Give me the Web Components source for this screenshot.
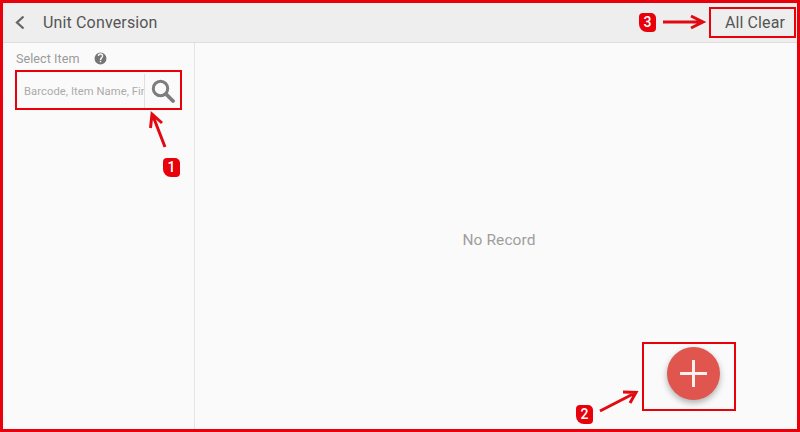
<!DOCTYPE html>
<html><head><meta charset="utf-8"><style>
html,body{margin:0;padding:0;width:800px;height:432px;overflow:hidden;background:#fafafa}
</style></head><body>
<template id="t-app"><style>
:host{display:flex;flex-direction:column;position:relative;box-sizing:border-box;width:800px;height:432px;border:3px solid #e8000b;background:#fafafa;font-family:Roboto,"Liberation Sans",sans-serif;overflow:hidden}
.body{flex:1;display:flex;min-height:0}
</style><slot name="bar"></slot><div class="body"><slot></slot></div><slot name="over"></slot></template>

<template id="t-bar"><style>
:host{display:flex;align-items:center;box-sizing:border-box;height:40px;background:#eeeeee;border-bottom:1px solid #dedede;color:#555}
svg{display:block;margin-left:11px}
.title{margin-left:18px;font-size:16px;letter-spacing:.15px}
.clear{margin-left:auto;margin-right:12px;font-size:16px;letter-spacing:.1px}
</style><svg width="11" height="15" viewBox="0 0 11 15" fill="none" stroke="#666" stroke-width="2.300"><path d="M9.500 1.500 L3 7.500 L9.500 13.500"/></svg><span class="title"><slot name="title"></slot></span><span class="clear"><slot name="action"></slot></span></template>

<template id="t-side"><style>
:host{display:block;box-sizing:border-box;width:192px;flex:none;border-right:1px solid #e4e4e4;padding:7px 12px 0 13px;color:#9a9a9a}
.lab{display:flex;align-items:center;height:16px;font-size:12.600px;letter-spacing:.05px}
svg{margin-left:14px;display:block}
.box{margin-top:8px}
</style><div class="lab"><slot name="label"></slot><svg width="13" height="13" viewBox="0 0 24 24"><path fill="#757575" d="M12 1a11 11 0 1 0 0 22 11 11 0 0 0 0-22zm1.300 18h-2.600v-2.600h2.600V19zm2.600-8.400-1.100 1.200c-.9.900-1.400 1.600-1.400 3.200h-2.600v-.6c0-1.400.5-2.700 1.400-3.700l1.600-1.600c.5-.4.700-1 .7-1.700a2.500 2.500 0 0 0-5 0H7a5 5 0 0 1 10 0c0 1.100-.4 2-1.100 2.700z"/></svg></div><div class="box"><slot></slot></div></template>

<template id="t-search"><style>
:host{display:flex;box-sizing:border-box;height:34px;width:164px;align-items:stretch;font-size:11.200px;color:#ababab;letter-spacing:.08px}
.txt{width:129px;flex:none;box-sizing:border-box;padding-left:8px;overflow:hidden;white-space:nowrap;line-height:36px;border-right:1px solid #e0e0e0}
.btn{flex:1;display:flex;align-items:center;justify-content:center}
</style><div class="txt"><slot></slot></div><div class="btn"><svg width="24" height="24" viewBox="0 0 24 24" fill="none" stroke="#7d7d7d"><circle cx="9.500" cy="9.500" r="7.200" stroke-width="3"/><path d="M15 15 L22 22" stroke-width="3.800" stroke-linecap="round"/></svg></div></template>

<template id="t-main"><style>
:host{flex:1;display:flex;align-items:center;justify-content:center;color:#9e9e9e;font-size:15.500px;letter-spacing:.1px;padding-top:7px;padding-left:6px;min-width:0}
</style><slot></slot></template>

<template id="t-fab"><style>
:host{position:absolute;left:664px;top:344px;width:53px;height:53px;border-radius:50%;background:#e0564e;box-shadow:0 3px 6px rgba(0,0,0,.3);display:flex;align-items:center;justify-content:center}
</style><svg width="27" height="27" viewBox="0 0 27 27" stroke="#fdf0ee" stroke-width="3"><path d="M13.500 0V27M0 13.500H27"/></svg></template>

<template id="t-mark"><style>
:host{position:absolute;box-sizing:border-box;border:2px solid #e8000b;display:block}
</style></template>

<template id="t-badge"><style>
:host{position:absolute;box-sizing:border-box;width:17px;height:19px;background:#e8000b;border-radius:4px 5px 4px 8px;color:#fff;font-family:Roboto,"Liberation Sans",Arial,sans-serif;font-weight:500;font-size:14px;line-height:19px;text-align:center}
</style><slot></slot></template>

<template id="t-arrows"><style>
:host{position:absolute;left:-3px;top:-3px;width:800px;height:432px;display:block;pointer-events:none}
svg{display:block}
</style><svg width="800" height="432" fill="none" stroke="#e20a12" stroke-width="3"><path d="M165 147 L153 116 M150.500 128 L152 114 L162 123"/><path d="M663 22 H702 M691 16 L703 22 L691 28"/><path d="M600 411 L635 393 M623 392 L636 392.500 L630 403"/></svg></template>

<ui-app>
  <ui-bar slot="bar"><span slot="title">Unit Conversion</span><span slot="action">All Clear</span></ui-bar>
  <ui-side><span slot="label">Select Item</span><ui-search>Barcode, Item Name, Find</ui-search></ui-side>
  <ui-main>No Record</ui-main>
  <ui-fab slot="over"></ui-fab>
  <ui-mark slot="over" style="left:12px;top:67px;width:167px;height:40px"></ui-mark>
  <ui-mark slot="over" style="left:706px;top:4px;width:87px;height:31px"></ui-mark>
  <ui-mark slot="over" style="left:639px;top:339px;width:94px;height:69px"></ui-mark>
  <ui-arrows slot="over"></ui-arrows>
  <ui-badge slot="over" style="left:160px;top:155px">1</ui-badge>
  <ui-badge slot="over" style="left:573px;top:402px">2</ui-badge>
  <ui-badge slot="over" style="left:636px;top:10px">3</ui-badge>
</ui-app>
<script>
const defs={'ui-app':'t-app','ui-bar':'t-bar','ui-side':'t-side','ui-search':'t-search','ui-main':'t-main','ui-fab':'t-fab','ui-mark':'t-mark','ui-badge':'t-badge','ui-arrows':'t-arrows'};
for(const [name,id] of Object.entries(defs)){
  customElements.define(name,class extends HTMLElement{constructor(){super();this.attachShadow({mode:'open'}).appendChild(document.getElementById(id).content.cloneNode(true));}});
}
</script>
</body></html>
